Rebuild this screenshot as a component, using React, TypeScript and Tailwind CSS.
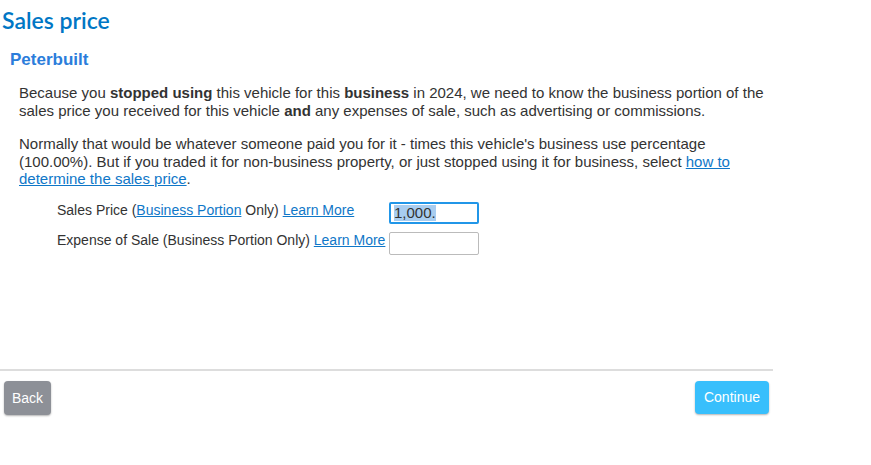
export default function App() {
  return (
    <div className="w-[871px] h-[465px] bg-white font-['Liberation_Sans',Arial,sans-serif] text-[#333]">
      <div className="w-[773px]">
        <div className="h-[369px]">
          <h1 className="pl-[2px] pt-[6px] font-['Lato',sans-serif] text-[23px] leading-[28px] font-semibold text-[#0077c5]">
            Sales price
          </h1>
          <h2 className="pl-[10px] pt-[15px] text-[17px] leading-[22px] font-bold text-[#2b7ddb]">
            Peterbuilt
          </h2>
          <div className="pl-[19px] pt-[13px] text-[15px] leading-[17.5px]">
            <p>
              Because you <b>stopped using</b> this vehicle for this <b>business</b> in 2024, we need to know the business portion of the sales price you received for this vehicle <b>and</b> any expenses of sale, such as advertising or commissions.
            </p>
            <p className="mt-[16px] w-[725px]">
              Normally that would be whatever someone paid you for it - times this vehicle's business use percentage (100.00%). But if you traded it for non-business property, or just stopped using it for business, select{" "}
              <a href="#" className="text-[#0f77c8] underline">how to determine the sales price</a>.
            </p>
          </div>
          <div className="pl-[57px] pt-[14px] flex flex-col gap-[8px] text-[14px]">
            <div className="flex items-start">
              <div className="w-[332px] whitespace-nowrap leading-[17px]">
                Sales Price (<a href="#" className="text-[#0f77c8] underline">Business Portion</a> Only){" "}
                <a href="#" className="text-[#0f77c8] underline">Learn More</a>
              </div>
              <div className="w-[90px] h-[22px] border-2 border-[#2196e8] rounded-[2px] px-[3px] flex items-center">
                <span className="bg-[#a8cdf0] text-[15px] leading-[16px] text-[#333]">1,000.</span>
              </div>
            </div>
            <div className="flex items-start">
              <div className="w-[332px] whitespace-nowrap leading-[17px]">
                Expense of Sale (Business Portion Only){" "}
                <a href="#" className="text-[#0f77c8] underline">Learn More</a>
              </div>
              <input className="w-[90px] h-[23px] border border-[#bbb] rounded-[2px] outline-none" />
            </div>
          </div>
        </div>
        <div className="border-t-2 border-[#ddd] pt-[10px] flex justify-between pl-[4px] pr-[4px]">
          <button className="h-[34px] px-[8px] rounded-[4px] bg-[#8d9097] text-white text-[14px] shadow-[0_1px_2px_rgba(0,0,0,0.3)]">
            Back
          </button>
          <button className="h-[33px] px-[9px] rounded-[4px] bg-[#38bffc] text-white text-[14px] shadow-[0_1px_2px_rgba(0,0,0,0.3)]">
            Continue
          </button>
        </div>
      </div>
    </div>
  );
}
